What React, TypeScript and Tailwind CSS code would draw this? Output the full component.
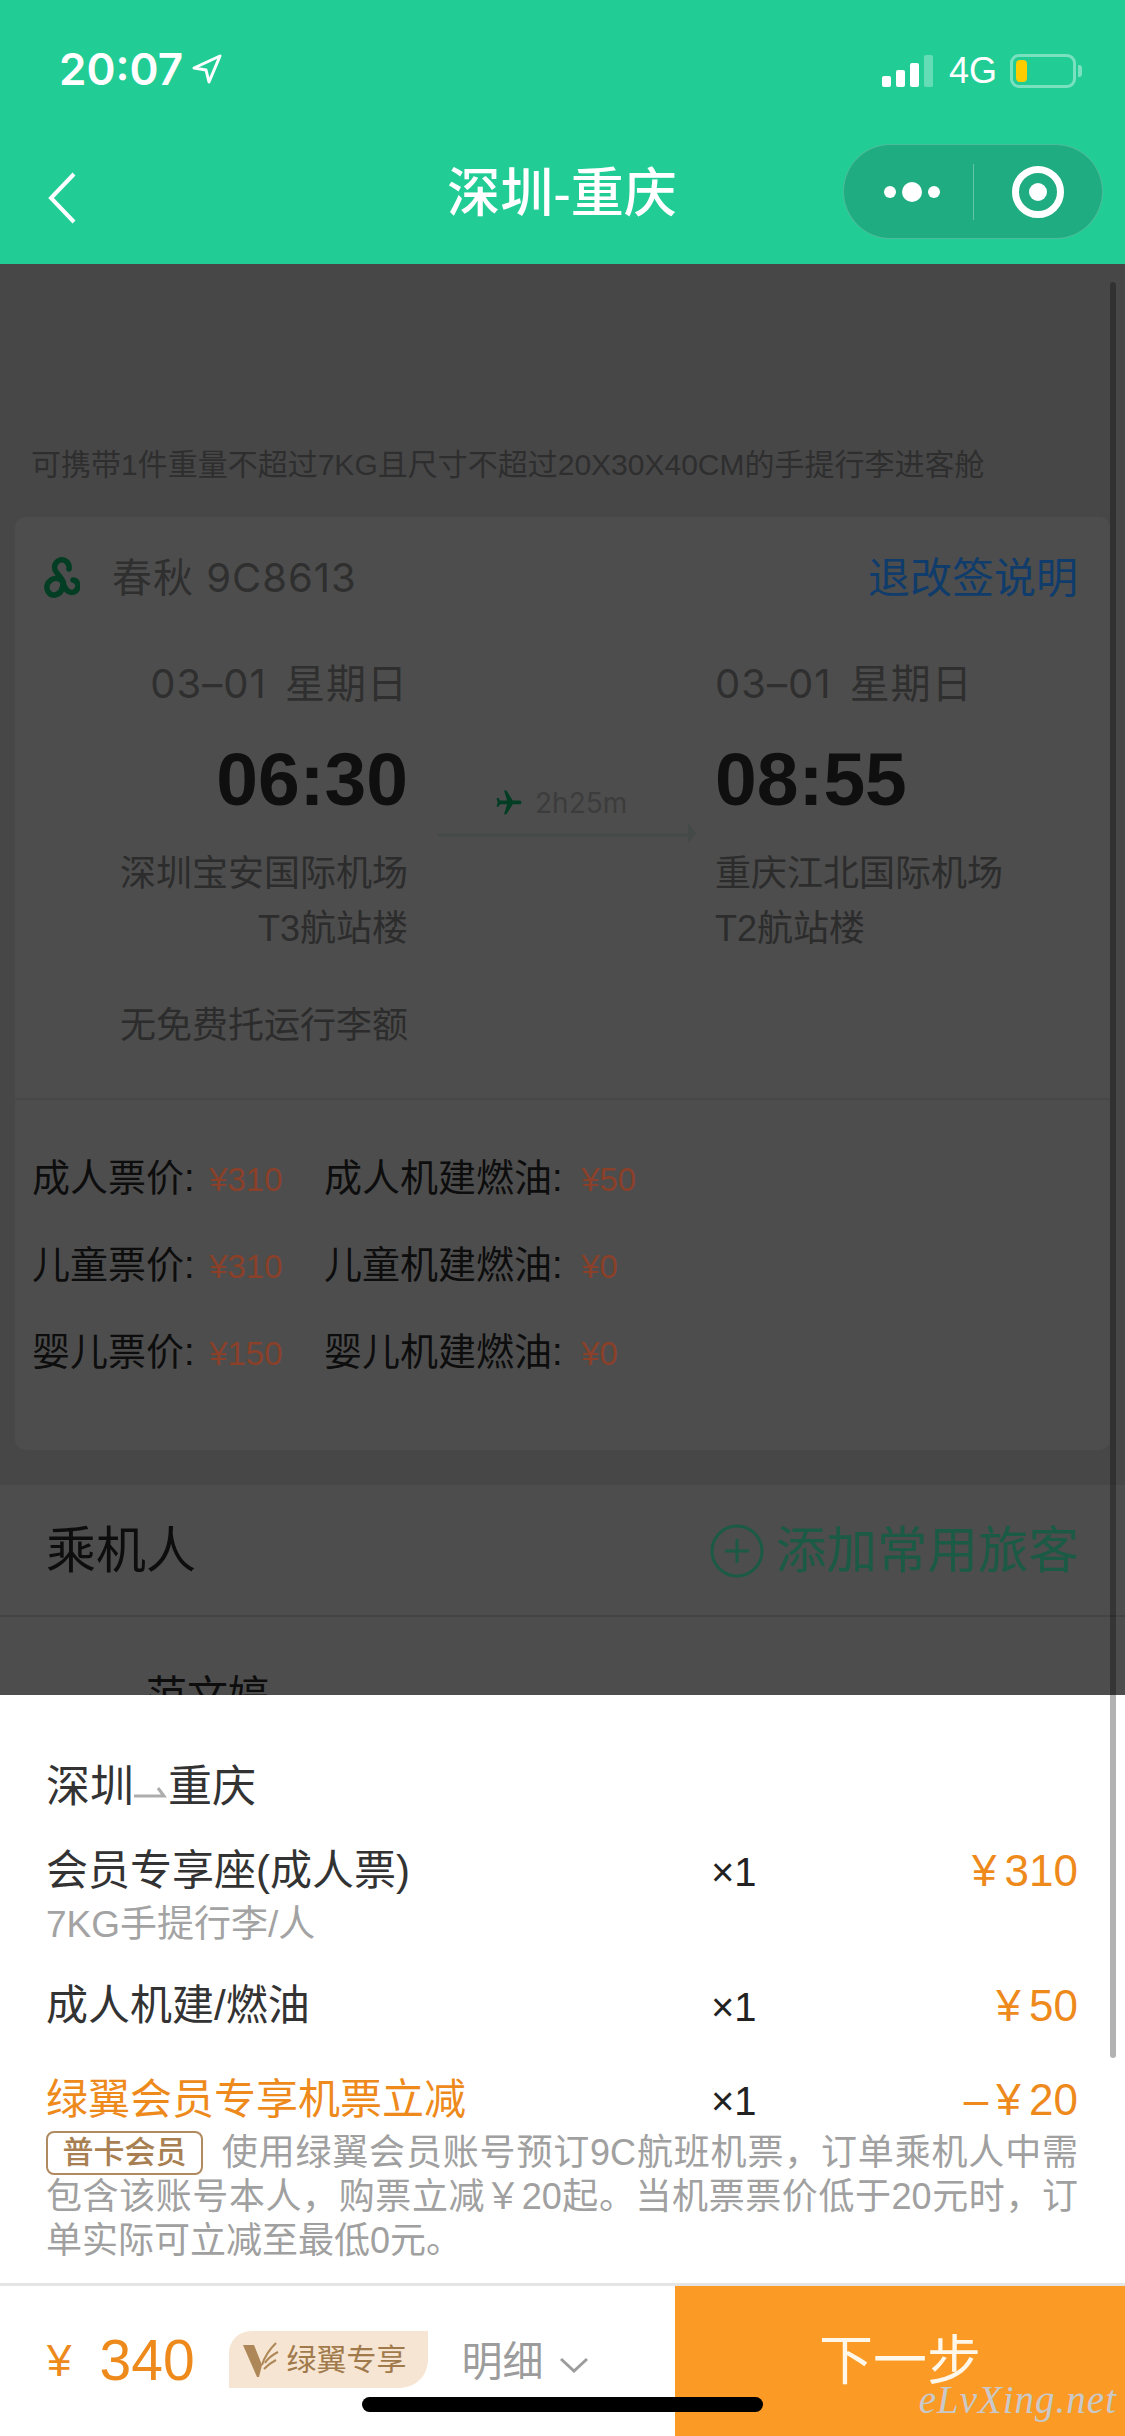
const fontStack = { fontFamily: '"Liberation Sans", "Noto Sans CJK SC", sans-serif' };

const fares = [
  { label: '成人票价:', price: '¥310', taxLabel: '成人机建燃油:', tax: '¥50' },
  { label: '儿童票价:', price: '¥310', taxLabel: '儿童机建燃油:', tax: '¥0' },
  { label: '婴儿票价:', price: '¥150', taxLabel: '婴儿机建燃油:', tax: '¥0' },
];

const StatusBar = () => (
  <div className="flex h-[136px] items-start justify-between pt-[47px] pl-[59px] pr-[43px] text-white">
    <div className="flex items-center">
      <span className="font-['Inter'] text-[44px] font-semibold leading-[44px]">20:07</span>
      <svg viewBox="0 0 30 30" className="ml-[9px] h-[30px] w-[30px]" fill="none" stroke="#ffffff" strokeWidth="3" strokeLinejoin="round">
        <path d="M28 2 L2 14 L14 16 L17 28 Z" />
      </svg>
    </div>
    <div className="flex items-center pt-[6px]">
      <div className="flex h-[32px] items-end gap-[5px]">
        <div className="h-[11px] w-[9px] rounded-[2px] bg-white" />
        <div className="h-[17px] w-[9px] rounded-[2px] bg-white" />
        <div className="h-[24px] w-[9px] rounded-[2px] bg-white" />
        <div className="h-[32px] w-[9px] rounded-[2px] bg-white/30" />
      </div>
      <span className="ml-[16px] text-[36px] leading-[36px]">4G</span>
      <div className="ml-[13px] flex h-[34px] w-[66px] items-center rounded-[9px] border-[3px] border-white/40 pl-[3px]">
        <div className="h-[22px] w-[11px] rounded-[4px] bg-[#ffcc00]" />
      </div>
      <div className="ml-[2px] h-[12px] w-[4px] rounded-r-[3px] bg-white/40" />
    </div>
  </div>
);

const NavBar = () => (
  <div className="relative flex h-[128px] items-start">
    <svg viewBox="0 0 30 52" className="ml-[47px] mt-[36px] h-[52px] w-[30px]" fill="none" stroke="#ffffff" strokeWidth="4">
      <path d="M27 2 L4 26 L27 50" />
    </svg>
    <div className="absolute left-0 right-[1px] top-[28px] text-center text-[53px] font-medium leading-[60px] text-white">深圳-重庆</div>
    <div className="ml-auto mr-[22px] mt-[8px] flex h-[95px] w-[260px] items-center rounded-full border border-white/20 bg-[#1fac80]">
      <div className="flex w-[129px] items-center justify-center gap-[6px] pl-[6px]">
        <div className="h-[12px] w-[12px] rounded-full bg-white" />
        <div className="h-[20px] w-[20px] rounded-full bg-white" />
        <div className="h-[12px] w-[12px] rounded-full bg-white" />
      </div>
      <div className="h-[56px] w-px bg-white/30" />
      <div className="flex flex-1 items-center justify-center">
        <div className="flex h-[52px] w-[52px] items-center justify-center rounded-full border-[7px] border-white">
          <div className="h-[18px] w-[18px] rounded-full bg-white" />
        </div>
      </div>
    </div>
  </div>
);

const SpringLogo = () => (
  <svg viewBox="0 0 36 42" className="h-[42px] w-[36px]" fill="none" stroke="#033e24" strokeWidth="5.5" strokeLinecap="round">
    <path d="M25 12 C26 5 20 2 16 3 C10 5 9 12 13 16 C15 19 18 21 19 25 C20 31 24 37 30 35 C36 32 35 24 29 23" />
    <path d="M19 25 C15 20 8 20 4 26 C1 32 5 39 11 38 C17 37 19 31 19 25" />
  </svg>
);

const RouteColumn = ({ date, time, airport, terminal, right }: { date: string; time: string; airport: string; terminal: string; right?: boolean }) => (
  <div className={right ? 'text-left' : 'text-right'}>
    <div className="font-['Inter','Noto_Sans_CJK_SC',sans-serif] text-[40px] leading-[56px] tracking-[1px] text-[#2f2f2f] [word-spacing:6px]">{date}</div>
    <div className="mt-[21px] text-[75px] font-bold leading-[92px] text-[#0f0f0f]">{time}</div>
    <div className="mt-[21px] text-[36px] leading-[55px] text-[#2c2c2c]">{airport}</div>
    <div className="text-[36px] leading-[55px] text-[#2c2c2c]">{terminal}</div>
  </div>
);

const FlightCard = () => (
  <div className="ml-[15px] h-[933px] w-[1095px] rounded-[10px] bg-[#4d4d4d]">
    <div className="h-[583px] border-b-2 border-[#474747]">
      <div className="flex h-[122px] items-center justify-between pl-[29px] pr-[32px]">
        <div className="flex items-center">
          <SpringLogo />
          <span className="ml-[32px] font-['Inter','Noto_Sans_CJK_SC',sans-serif] text-[40px] tracking-[1px] text-[#2f2f2f]">春秋 9C8613</span>
        </div>
        <span className="text-[42px] text-[#0f3c6b]">退改签说明</span>
      </div>
      <div className="mt-[17px] flex">
        <div className="w-[393px]">
          <RouteColumn date="03–01 星期日" time="06:30" airport="深圳宝安国际机场" terminal="T3航站楼" />
          <div className="mt-[42px] text-right text-[36px] leading-[55px] text-[#2c2c2c]">无免费托运行李额</div>
        </div>
        <div className="ml-[30px] w-[258px] pt-[127px]">
          <div className="flex h-[40px] items-center pl-[56px]">
            <svg viewBox="0 0 24 24" className="h-[30px] w-[30px] rotate-90" fill="#033e24">
              <path d="M21 16v-2l-8-5V3.5c0-.83-.67-1.5-1.5-1.5S10 2.67 10 3.5V9l-8 5v2l8-2.5V19l-2 1.5V22l3.5-1 3.5 1v-1.5L13 19v-5.5l8 2.5z" />
            </svg>
            <span className="ml-[11px] font-['Inter'] text-[28px] text-[#3c3c3c]">2h25m</span>
          </div>
          <svg viewBox="0 0 258 24" className="mt-[-2px] h-[24px] w-[258px]" fill="none">
            <path d="M0 14 H254" stroke="#444a48" strokeWidth="3" />
            <path d="M250 2 L258 12 L250 23 Z" fill="#444a48" />
          </svg>
        </div>
        <div className="ml-[19px]">
          <RouteColumn right date="03–01 星期日" time="08:55" airport="重庆江北国际机场" terminal="T2航站楼" />
        </div>
      </div>
    </div>
    <div className="flex flex-col gap-[37px] px-[17px] pt-[54px]">
      {fares.map((f) => (
        <div key={f.label} className="flex h-[50px] items-center text-[38px] leading-[50px] text-[#0d0d0d]">
          <div className="w-[292px]">
            {f.label} <span className="ml-[4px] text-[33px] text-[#8a4029]">{f.price}</span>
          </div>
          <div>
            {f.taxLabel} <span className="ml-[8px] text-[33px] text-[#8a4029]">{f.tax}</span>
          </div>
        </div>
      ))}
    </div>
  </div>
);

const Passengers = () => (
  <div className="mt-[35px] bg-[#4d4d4d]">
    <div className="flex h-[132px] items-center justify-between border-b-2 border-[#444444] pl-[46px] pr-[46px] pt-[2px]">
      <span className="text-[50px] text-[#0d0d0d]">乘机人</span>
      <div className="flex items-center">
        <svg viewBox="0 0 54 54" className="h-[54px] w-[54px]" fill="none" stroke="#1b5a45" strokeWidth="3">
          <circle cx="27" cy="27" r="25" />
          <path d="M27 15 V39 M15 27 H39" />
        </svg>
        <span className="ml-[12px] text-[50.5px] text-[#1b5a45]">添加常用旅客</span>
      </div>
    </div>
    <div className="pl-[146px] pt-[54px] text-[41px] leading-[50px] text-[#0d0d0d]">范文婷</div>
  </div>
);

const OrderRow = ({ name, price, accent }: { name: string; price: string; accent?: boolean }) => (
  <div className="grid h-[50px] grid-cols-[665px_1fr_auto] items-center">
    <span className={accent ? 'text-[42px] leading-[50px] text-[#ee8a1c]' : 'text-[42px] leading-[50px] text-[#333333]'}>{name}</span>
    <span className="pt-[3px] text-[40px] leading-[50px] text-[#222222]">×1</span>
    <span className="text-[44px] leading-[50px] text-[#ee8a1c] [word-spacing:-4px]">{price}</span>
  </div>
);

const PriceSheet = () => (
  <div className="absolute bottom-0 left-0 right-0 h-[741px] bg-white">
    <div className="pl-[46px] pr-[47px] pt-[67px]">
      <div className="flex h-[50px] items-center text-[44px] leading-[50px] text-[#333333]">
        深圳
        <svg viewBox="0 0 34 14" className="mt-[10px] h-[14px] w-[34px]" fill="none">
          <path d="M0 11 H30 L24 3" stroke="#adadad" strokeWidth="3" />
        </svg>
        重庆
      </div>
      <div className="mt-[32px]">
        <OrderRow name="会员专享座(成人票)" price="¥ 310" />
      </div>
      <div className="mt-[9px] text-[37px] leading-[44px] text-[#a3a3a3]">7KG手提行李/人</div>
      <div className="mt-[32px]">
        <OrderRow name="成人机建/燃油" price="¥ 50" />
      </div>
      <div className="mt-[44px]">
        <OrderRow accent name="绿翼会员专享机票立减" price="– ¥ 20" />
      </div>
      <p className="mt-[8px] text-justify text-[36px] leading-[44px] text-[#a0a0a0]">
        <span className="mr-[18px] inline-flex h-[44px] w-[157px] items-center justify-center rounded-[8px] border-2 border-[#b08a60] align-top text-[31px] font-medium leading-[40px] text-[#a77f52]">普卡会员</span>
        使用绿翼会员账号预订9C航班机票，订单乘机人中需包含该账号本人，购票立减￥20起。当机票票价低于20元时，订单实际可立减至最低0元。
      </p>
    </div>
    <div className="mt-[20px] flex h-[153px] border-t-[3px] border-[#e4e4e4]">
      <div className="flex w-[675px] items-center pl-[47px] text-[#ee8a1c]">
        <span className="text-[44px]">¥</span>
        <span className="ml-[28px] pb-[2px] text-[57px] leading-[60px]">340</span>
        <div className="mb-[4px] ml-[34px] flex h-[57px] w-[199px] items-center rounded-tl-[22px] rounded-br-[28px] bg-[#f6e5d2] pl-[14px]">
          <svg viewBox="0 0 36 36" className="h-[36px] w-[36px]" fill="none">
            <path d="M0 4 H11 L19 24 L16 36 H14 Z" fill="#ad8757" />
            <path d="M19 24 C22 14 27 8 33 2 M22 22 C25 17 29 14 35 11 M21 28 C25 24 29 21 33 19" stroke="#ad8757" strokeWidth="2" />
          </svg>
          <span className="ml-[8px] text-[30px] text-[#a17a4c]">绿翼专享</span>
        </div>
        <span className="ml-[34px] pt-[4px] text-[41px] text-[#9c9c9c]">明细</span>
        <svg viewBox="0 0 30 16" className="ml-[15px] mt-[8px] h-[16px] w-[30px]" fill="none" stroke="#9c9c9c" strokeWidth="3">
          <path d="M2 2 L15 14 L28 2" />
        </svg>
      </div>
      <div className="flex flex-1 items-center justify-center bg-[#fb9a24] text-[54px] text-[#fff8ea]">下一步</div>
    </div>
    <div className="absolute bottom-[7px] right-[8px] font-['Liberation_Serif'] text-[39px] italic tracking-[1px] text-[#c9c9c9]">eLvXing.net</div>
    <div className="absolute bottom-[24px] left-[362px] h-[15px] w-[401px] rounded-full bg-black" />
  </div>
);

export default function App() {
  return (
    <div className="relative h-[2436px] w-[1125px] overflow-hidden bg-[#474748]" style={fontStack}>
      <div className="h-[264px] bg-[#22cd95]">
        <StatusBar />
        <NavBar />
      </div>
      <div className="h-[180px]" />
      <div className="pl-[31px] text-[30px] leading-[42px] text-[#2e2e2e]">可携带1件重量不超过7KG且尺寸不超过20X30X40CM的手提行李进客舱</div>
      <div className="h-[31px]" />
      <FlightCard />
      <Passengers />
      <PriceSheet />
      <div className="absolute left-[1110px] top-[282px] h-[1776px] w-[6px] rounded-full bg-black/30" />
    </div>
  );
}
